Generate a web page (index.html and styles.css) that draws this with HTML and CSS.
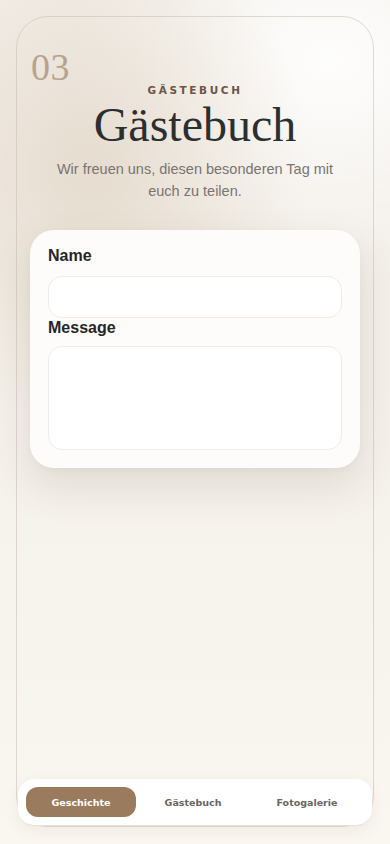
FILE: index.html
```html
<!DOCTYPE html>
<html lang="de">
<head>
<meta charset="utf-8">
<meta name="viewport" content="width=device-width, initial-scale=1">
<title>Gästebuch</title>
<link rel="stylesheet" href="styles.css">
</head>
<body>
<main class="page">
  <section class="panel">
    <div class="num">03</div>
    <header class="head">
      <p class="eyebrow">Gästebuch</p>
      <h1 class="title">Gästebuch</h1>
      <p class="sub">Wir freuen uns, diesen besonderen Tag mit euch zu teilen.</p>
    </header>
    <form class="card">
      <label class="label" for="name">Name</label>
      <input class="field" id="name" type="text">
      <label class="label" for="msg">Message</label>
      <textarea class="field area" id="msg"></textarea>
    </form>
  </section>
</main>
<nav class="tabs">
  <a class="tab active">Geschichte</a>
  <a class="tab">Gästebuch</a>
  <a class="tab">Fotogalerie</a>
</nav>
</body>
</html>
```
FILE: styles.css
```css
* { box-sizing: border-box; }
html, body { margin: 0; height: 100%; }
body {
  width: 390px;
  height: 844px;
  overflow: hidden;
  font-family: "Liberation Sans", Arial, sans-serif;
  background:
    radial-gradient(ellipse 220px 260px at 90px 170px, rgba(226,214,199,0.75), rgba(226,214,199,0) 100%),
    radial-gradient(ellipse 260px 200px at 330px 60px, rgba(255,255,255,0.9), rgba(255,255,255,0) 100%),
    linear-gradient(180deg, #f3efe9 0%, #f4f0ea 45%, #faf6f0 100%);
  position: relative;
}
.page { padding: 16px 16px 16px; height: 844px; }
.panel {
  height: 811px;
  border: 1px solid rgba(200,190,178,0.55);
  border-radius: 32px;
  padding: 65px 13px 0;
  position: relative;
}
.num {
  position: absolute;
  left: 14px;
  top: 28px;
  font-family: "Liberation Serif", "DejaVu Serif", serif;
  font-size: 38px;
  color: #b7a38d;
  letter-spacing: 0.5px;
}
.head { text-align: center; }
.eyebrow {
  margin: 0;
  padding-top: 2px;
  font-family: "DejaVu Sans", sans-serif;
  font-weight: 700;
  font-size: 10.5px;
  letter-spacing: 2.6px;
  color: #6b5544;
  text-transform: uppercase;
  line-height: 13px;
}
.title {
  margin: 2px 0 0;
  font-family: "Liberation Serif", "DejaVu Serif", serif;
  font-weight: 400;
  font-size: 48px;
  line-height: 52px;
  color: #2b2f2f;
}
.sub {
  margin: 7px auto 0;
  width: 290px;
  font-size: 14.5px;
  line-height: 22px;
  color: #7a7470;
}
.card {
  margin-top: 28px;
  background: #fdfcfa;
  border-radius: 24px;
  padding: 16px 18px 18px;
  display: flex;
  flex-direction: column;
  box-shadow: 0 18px 40px rgba(120,100,75,0.16), 0 2px 6px rgba(120,100,75,0.05);
}
.label {
  font-size: 16px;
  font-weight: 700;
  color: #262626;
  line-height: 20px;
  margin-bottom: 10px;
}
.field {
  display: block;
  width: 100%;
  height: 42px;
  border: 1px solid #eeebe8;
  border-radius: 14px;
  background: #fff;
  font: inherit;
  margin: 0;
}
.field + .label { margin-top: 0; margin-bottom: 8px; }
.area { height: 104px; resize: none; }
.tabs {
  position: absolute;
  left: 18px;
  top: 779px;
  width: 354px;
  height: 47px;
  background: #fff;
  border-radius: 16px;
  padding: 8px;
  display: grid;
  grid-template-columns: 110px 1fr 1fr;
  align-items: stretch;
  box-shadow: 0 4px 14px rgba(120,100,75,0.08);
  border-bottom: 1px solid #e6e0d8;
}
.tab {
  display: flex;
  align-items: center;
  justify-content: center;
  font-family: "DejaVu Sans", sans-serif;
  font-weight: 700;
  font-size: 9.5px;
  color: #6a6561;
  border-radius: 12px;
}
.tab.active { background: #9a7b5e; color: #fff; }
```
